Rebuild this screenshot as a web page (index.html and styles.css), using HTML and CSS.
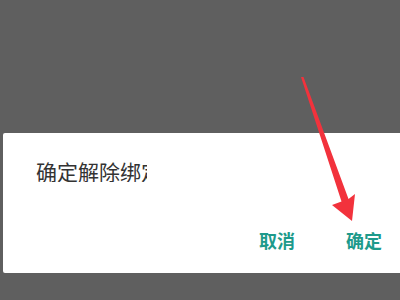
FILE: index.html
```html
<!DOCTYPE html>
<html lang="zh">
<head>
<meta charset="utf-8">
<link rel="stylesheet" href="styles.css">
</head>
<body>
<div class="dialog">
  <div class="title-clip"><div class="title">确定解除绑定</div></div>
  <div class="actions">
    <span class="btn">取消</span>
    <span class="btn">确定</span>
  </div>
</div>
<svg class="arrow" width="400" height="300" viewBox="0 0 400 300">
  <polygon points="301,77 303.5,77 348.5,199 355,194 352,221 332,205 341.5,201.5" fill="#f2323c"/>
</svg>
</body>
</html>
```

FILE: styles.css
```css
html, body {
  margin: 0;
  padding: 0;
}
body {
  width: 400px;
  height: 300px;
  background: #5f5f5f;
  overflow: hidden;
  position: relative;
  font-family: "Noto Sans CJK SC", "Noto Sans", sans-serif;
}
.dialog {
  margin: 133px 0 0 3px;
  width: 397px;
  height: 140px;
  background: #ffffff;
  border-radius: 2px 0 0 2px;
  box-sizing: border-box;
  padding: 28px 18px 0 33px;
  display: flex;
  flex-direction: column;
}
.title-clip {
  width: 111px;
  overflow: hidden;
}
.title {
  white-space: nowrap;
  font-size: 21px;
  line-height: 21px;
  color: #333333;
}
.actions {
  margin-top: 49px;
  display: flex;
  justify-content: flex-end;
  gap: 51px;
}
.btn {
  font-size: 18px;
  line-height: 18px;
  font-weight: 700;
  color: #1d9a8b;
}
.arrow {
  position: absolute;
  left: 0;
  top: 0;
}
```
